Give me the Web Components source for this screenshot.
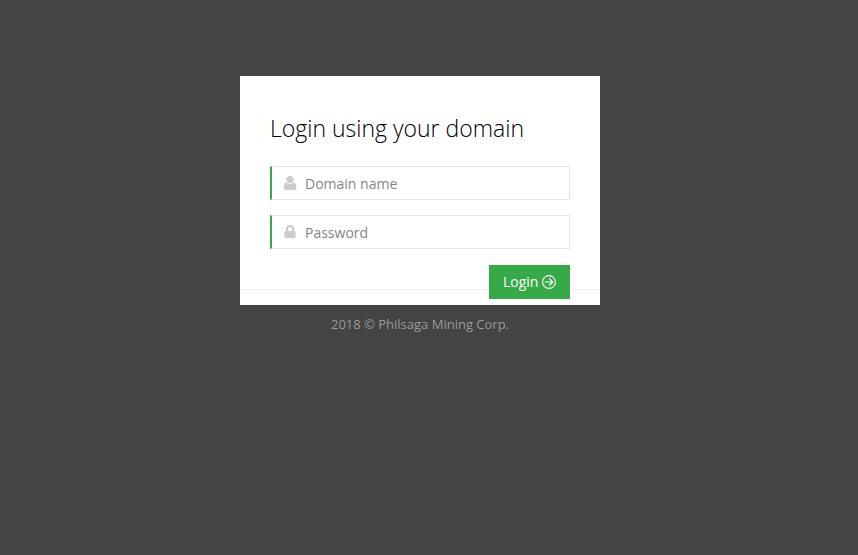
<!DOCTYPE html>
<html lang="en"><head><meta charset="utf-8"><title>Login</title>
<style>html,body{margin:0;height:100%}body{background:#444;font-family:"Open Sans",sans-serif;overflow:hidden}</style></head>
<body><login-page></login-page>
<script>
const define=(name,html)=>customElements.define(name,class extends HTMLElement{constructor(){super();this.attachShadow({mode:'open'}).innerHTML=html;}});
define('login-icon-field',`<style>
:host{display:block;margin-bottom:15px}
.box{box-sizing:border-box;height:34px;display:flex;align-items:center;border:1px solid #e5e5e5;border-left:2px solid #35aa47;background:#fff;padding-left:11px;color:#858585;font-size:14px;line-height:20px}
.icon{width:14px;height:14px;display:flex;margin-right:8px;color:#ccc}
.text{padding-top:2px}
</style><div class="box"><span class="icon"><slot name="icon"></slot></span><span class="text"><slot></slot></span></div>`);
define('login-button',`<style>
:host{display:flex;align-items:center;box-sizing:border-box;width:81px;height:34px;padding-left:14px;gap:4px;background:#35aa47;color:#fff;font-size:14px;line-height:20px}
svg{display:block;flex:none}
</style><span><slot></slot></span><svg width="14" height="14" viewBox="0 0 14 14" fill="none" stroke="#fff" stroke-width="1.1"><circle cx="7" cy="7" r="6.4"/><path d="M2.800 7h8M7.300 3.500 10.800 7 7.300 10.500"/></svg>`);
define('login-card',`<style>
:host{display:block;box-sizing:border-box;width:360px;height:229px;background:#fff;padding:35px 30px 0}
h3{margin:0 0 20px;font-weight:300;font-size:23px;line-height:35px;color:#000;white-space:nowrap}
.actions{display:flex;justify-content:flex-end;margin:16px -30px 0;padding-right:30px;height:34px;background:linear-gradient(#eee,#eee) 0 24px/100% 1px no-repeat}
</style><h3><slot name="title"></slot></h3><slot></slot><div class="actions"><slot name="action"></slot></div>`);
define('login-page',`<style>
:host{display:flex;flex-direction:column;align-items:center;box-sizing:border-box;height:100%;padding:76px 18px 0 0}
footer{padding-top:10px;font-size:13px;line-height:18px;color:#999}
</style><login-card><span slot="title">Login using your domain</span>
<login-icon-field><svg slot="icon" width="14" height="14" viewBox="0 0 14 14" fill="currentColor"><circle cx="7" cy="3.500" r="3.500"/><path d="M3.500 6.600C1.500 6.800.6 8.600.6 11c0 1.900.9 3 2.500 3h7.800c1.600 0 2.500-1.100 2.500-3 0-2.400-.9-4.200-2.900-4.400-1.900 1.700-5.100 1.700-7 0Z"/></svg>Domain name</login-icon-field>
<login-icon-field><svg slot="icon" width="14" height="14" viewBox="0 0 14 14" fill="currentColor"><path fill-rule="evenodd" d="M3 6V4a4 4 0 0 1 8 0V6h.7q.8 0 .8.8v5.400q0 .8-.8.8h-9.400q-.8 0-.8-.8V6.800q0-.8.8-.8ZM5 6h4V4a2 2 0 0 0-4 0Z"/></svg>Password</login-icon-field>
<login-button slot="action">Login</login-button></login-card>
<footer>2018 © Philsaga Mining Corp.</footer>`);
</script></body></html>
